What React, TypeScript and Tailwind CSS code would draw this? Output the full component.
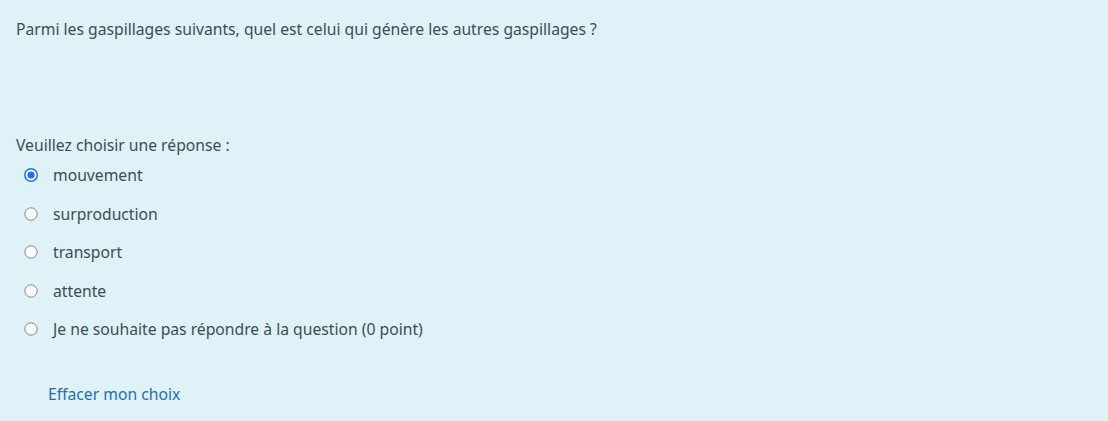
const OPTIONS = [
  "mouvement",
  "surproduction",
  "transport",
  "attente",
  "Je ne souhaite pas répondre à la question (0 point)",
];

function Radio({ checked }: { checked: boolean }) {
  return (
    <svg width="14" height="14" viewBox="0 0 14 14" className="shrink-0">
      {checked ? (
        <>
          <circle cx="7" cy="7" r="6.25" fill="#fff" stroke="#1a73e8" strokeWidth="1.5" />
          <circle cx="7" cy="7" r="3.6" fill="#1a73e8" />
        </>
      ) : (
        <circle cx="7" cy="7" r="6.2" fill="#fff" stroke="#858585" strokeWidth="1" />
      )}
    </svg>
  );
}

export default function App() {
  return (
    <div
      className="w-[1108px] h-[421px] bg-[#def2f8] px-4 pt-[18px] text-[15.7px] leading-[22.5px] text-[#3a4e58]"
      style={{ fontFamily: '"Noto Sans", "Open Sans", sans-serif' }}
    >
      <p>Parmi les gaspillages suivants, quel est celui qui génère les autres gaspillages ?</p>

      <div className="mt-[93px]">
        <p>Veuillez choisir une réponse :</p>
        <div className="flex flex-col">
          {OPTIONS.map((o, i) => (
            <label key={o} className="flex items-center h-[38.5px] pl-[8px]">
              <Radio checked={i === 0} />
              <span className="ml-[15px]">{o}</span>
            </label>
          ))}
        </div>
        <a className="block mt-[34px] ml-[32px] text-[#1f6fb5] w-fit">Effacer mon choix</a>
      </div>
    </div>
  );
}
